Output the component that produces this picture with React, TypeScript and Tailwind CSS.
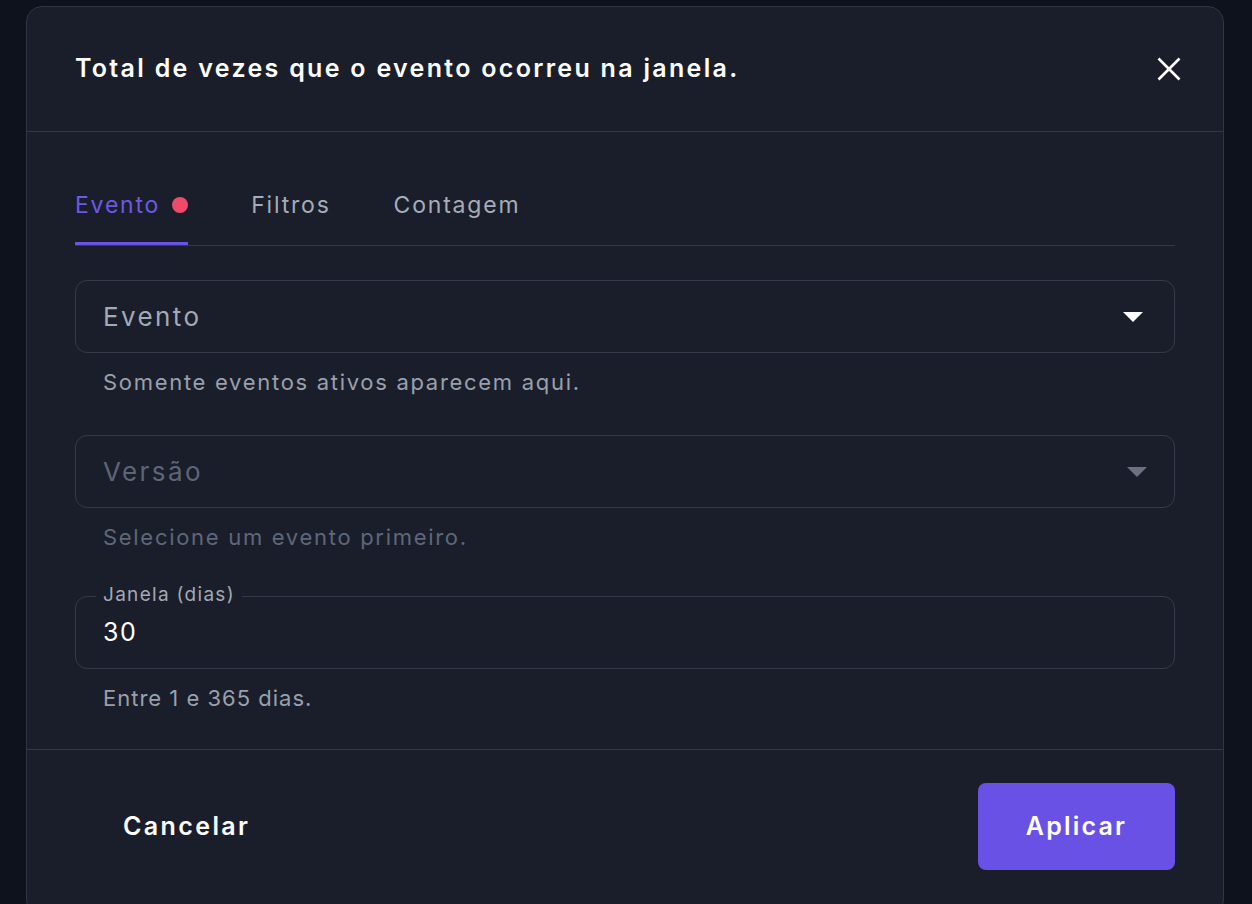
const font = { fontFamily: "Inter, 'Noto Sans', sans-serif" };

function Caret({ disabled }: { disabled?: boolean }) {
  return (
    <svg width="20" height="10" viewBox="0 0 20 10" className={disabled ? "text-[#6b7180]" : "text-white"}>
      <path d="M0 0 L20 0 L10 10 Z" fill="currentColor" />
    </svg>
  );
}

function SelectField({ label, helper, disabled }: { label: string; helper: string; disabled?: boolean }) {
  return (
    <div>
      <div
        className={`flex h-[73px] items-center justify-between rounded-[12px] border border-[#343a48] pl-[27px] ${
          disabled ? "pr-[27px]" : "pr-[31px]"
        }`}
      >
        <span className={`text-[26px] tracking-[2.4px] ${disabled ? "text-[#5d6579]" : "text-[#a3a9b6]"}`}>{label}</span>
        <Caret disabled={disabled} />
      </div>
      <p
        className={`mt-[16px] pl-[28px] text-[22px] leading-[26px] tracking-[1.7px] ${
          disabled ? "text-[#5f677a]" : "text-[#9aa0ac]"
        }`}
      >
        {helper}
      </p>
    </div>
  );
}

export default function App() {
  return (
    <div className="h-[904px] overflow-hidden bg-[#0e121c] pl-[26px] pt-[6px]" style={font}>
      <div className="flex h-[910px] w-[1198px] flex-col rounded-[16px] border border-[#2f3544] bg-[#191e2a]">
        <header className="flex h-[125px] items-center justify-between border-b border-[#323848] pl-[48px] pr-[42px]">
          <h2 className="text-[25px] font-semibold tracking-[2.3px] text-white">
            Total de vezes que o evento ocorreu na janela.
          </h2>
          <svg width="24" height="24" viewBox="0 0 24 24" className="text-white">
            <path d="M1.5 1.5 L22.5 22.5 M22.5 1.5 L1.5 22.5" stroke="currentColor" strokeWidth="2.6" />
          </svg>
        </header>

        <div className="px-[48px] pt-[57px]">
          <div className="flex gap-[63px] border-b border-[#323848] text-[23px] tracking-[1.8px]">
            <div className="flex items-center gap-[12px] border-b-[3px] border-[#6a54e4] pb-[21px] leading-[32px] text-[#6c59e6]">
              Evento
              <span className="h-[16px] w-[16px] rounded-full bg-[#ef4a6a]" />
            </div>
            <div className="pb-[24px] leading-[32px] text-[#a6acb8]">Filtros</div>
            <div className="pb-[24px] leading-[32px] text-[#a6acb8]">Contagem</div>
          </div>

          <div className="mt-[34px] flex flex-col gap-[40px]">
            <SelectField label="Evento" helper="Somente eventos ativos aparecem aqui." />
            <SelectField label="Versão" helper="Selecione um evento primeiro." disabled />
            <div>
              <div className="relative mt-[6px] flex h-[73px] items-center rounded-[12px] border border-[#343a48] pl-[27px]">
                <span className="absolute left-[20px] top-[-14px] bg-[#191e2a] px-[7px] text-[19px] leading-[24px] tracking-[1.3px] text-[#a3a9b6]">
                  Janela (dias)
                </span>
                <span className="text-[25px] tracking-[1.5px] text-white">30</span>
              </div>
              <p className="mt-[16px] pl-[28px] text-[22px] leading-[26px] tracking-[1px] text-[#9aa0ac]">
                Entre 1 e 365 dias.
              </p>
            </div>
          </div>
        </div>

        <footer className="mt-[38px] flex items-center justify-between border-t border-[#323848] px-[48px] pt-[33px]">
          <button className="h-[87px] px-[48px] text-[25px] font-semibold tracking-[2.4px] text-white">Cancelar</button>
          <button className="h-[87px] w-[197px] rounded-[8px] bg-[#6a51e6] text-[25px] font-semibold tracking-[2.2px] text-white">
            Aplicar
          </button>
        </footer>
      </div>
    </div>
  );
}
